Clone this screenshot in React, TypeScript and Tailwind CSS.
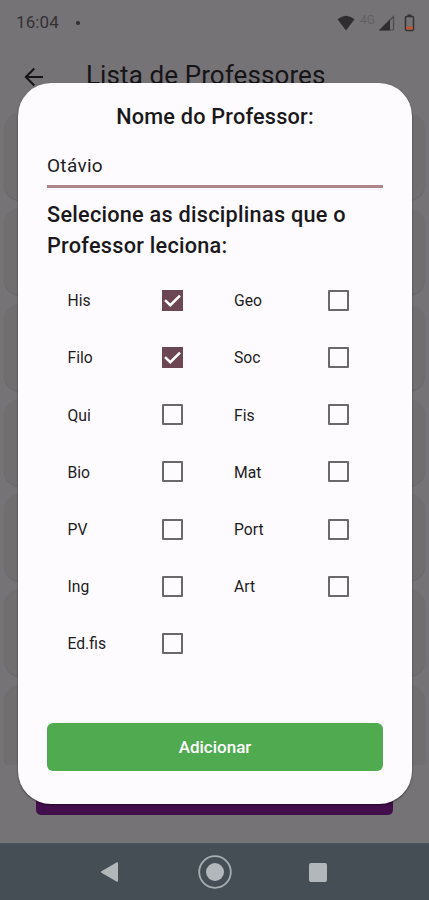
import React, { useState } from "react";

const DISCIPLINES = ["His", "Geo", "Filo", "Soc", "Qui", "Fis", "Bio", "Mat", "PV", "Port", "Ing", "Art", "Ed.fis"];

function StatusBar() {
    return (
        <div className="flex h-[45px] shrink-0 items-center justify-between pl-4 pr-[14px] text-[#333133]">
            <div className="flex items-center text-[17px] tracking-[0.1px]">
                <span>16:04</span>
                <span className="ml-[17px] h-1 w-1 rounded-full bg-[#2f2d2f]" />
            </div>
            <div className="flex items-center">
                <svg width="18" height="16" viewBox="0 0 18 16">
                    <path d="M0.5 4.3Q9-3 17.5 4.3L9 15.5Z" fill="#2f2d2f" />
                </svg>
                <span className="ml-[5px] mb-[6px] w-[17px] text-[12px] leading-none text-[#626063]">4G</span>
                <svg className="ml-[2px]" width="16" height="16" viewBox="0 0 16 16">
                    <path d="M1 15L14.5 1.5V15Z" fill="none" stroke="#4d4b4d" strokeWidth="1.2" />
                    <path d="M0 15.5L11 4.5V15.5Z" fill="#2f2d2f" />
                </svg>
                <svg className="ml-[9px]" width="11" height="18" viewBox="0 0 11 18">
                    <path d="M3.5 0.5h4v2h-4z" fill="#333133" />
                    <rect x="1.5" y="2.5" width="8" height="14" rx="1.2" fill="none" stroke="#333133" strokeWidth="1.5" />
                    <path d="M2.3 12.5h6.4v3h-6.4z" fill="#c4552f" />
                </svg>
            </div>
        </div>
    );
}

function NavigationBar() {
    return (
        <div className="flex h-[57px] shrink-0 items-center justify-center gap-[77px] border-t border-[#49555a] bg-[#454e54]">
            <svg width="20" height="22" viewBox="0 0 20 22">
                <path d="M0.8 11L16.3 2V20Z" fill="#b2b8ba" stroke="#b2b8ba" strokeWidth="1.5" strokeLinejoin="round" />
            </svg>
            <svg width="34" height="34" viewBox="0 0 34 34">
                <circle cx="17" cy="17" r="15.8" fill="none" stroke="#a7aeb1" strokeWidth="1.8" />
                <circle cx="17" cy="17" r="9" fill="#b2b8ba" />
            </svg>
            <div className="flex w-5">
                <div className="h-[19px] w-[18px] rounded-[2px] bg-[#b2b8ba]" />
            </div>
        </div>
    );
}

function DisciplineItem({ name, checked, onToggle }: { name: string; checked: boolean; onToggle: () => void }) {
    return (
        <label className="flex h-[57.15px] items-center">
            <span className="w-[94px] pt-px text-[15.7px] text-[#1d1b1e]">{name}</span>
            <input type="checkbox" className="sr-only" checked={checked} onChange={onToggle} />
            {checked ? (
                <span className="flex h-[21px] w-[21px] items-center justify-center bg-[#6c4653]">
                    <svg width="21" height="21" viewBox="0 0 21 21">
                        <path d="M3 10.2L8.3 15.2L18 5.7" fill="none" stroke="#fff" strokeWidth="2.5" />
                    </svg>
                </span>
            ) : (
                <span className="h-[21px] w-[21px] rounded-[1px] border-2 border-[#6a686b]" />
            )}
        </label>
    );
}

export default function App() {
    const [name, setName] = useState("Otávio");
    const [selected, setSelected] = useState<string[]>(["His", "Filo"]);

    const toggle = (discipline: string) => {
        setSelected((prev) =>
            prev.includes(discipline) ? prev.filter((d) => d !== discipline) : [...prev, discipline]
        );
    };

    return (
        <div className="relative flex h-[900px] w-[429px] flex-col overflow-hidden bg-[#757376] font-[Roboto,sans-serif]">
            <StatusBar />
            <div className="flex h-[63px] shrink-0 items-center pl-[24px] text-[#151416]">
                <svg width="20" height="20" viewBox="0 0 20 20">
                    <path d="M19 10H2M10.3 1.5L1.8 10L10.3 18.5" fill="none" stroke="#151416" strokeWidth="2" />
                </svg>
                <span className="mb-[3px] ml-[42px] text-[26px] leading-none tracking-[0.1px]">Lista de Professores</span>
            </div>
            <div className="flex h-[657px] shrink-0 flex-col gap-[8.3px] overflow-hidden px-1 pt-[5px]">
                {[0, 1, 2, 3, 4, 5, 6].map((i) => (
                    <div key={i} className="h-[87px] shrink-0 rounded-[16px] bg-[#706e6f] shadow-[0_1px_1px_rgba(0,0,0,0.12)]" />
                ))}
            </div>
            <div className="mx-9 mt-[2px] h-12 shrink-0 rounded-[5px] bg-[#430e4c]" />
            <div className="flex-1" />
            <NavigationBar />

            <div className="absolute left-[18px] top-[83px] flex h-[720.5px] w-[393.5px] flex-col rounded-[33px] bg-[#fefbff] pl-[29px] pr-[28.5px] shadow-[0_1px_2px_rgba(0,0,0,0.5)]">
                <h2 className="mt-[22px] text-center text-[21.7px] font-medium leading-6 tracking-[0.2px] text-[#1a181b]">
                    Nome do Professor:
                </h2>
                <input
                    className="mt-[14px] h-[45px] w-full border-b-[3px] border-[#ad858d] pt-[3px] text-[19px] tracking-[0.3px] text-[#1d1b1e] outline-none"
                    value={name}
                    onChange={(e) => setName(e.target.value)}
                />
                <h3 className="mt-[11px] text-[21.7px] font-medium leading-[31px] tracking-[0.25px] text-[#1a181b]">
                    Selecione as disciplinas que o Professor leciona:
                </h3>
                <div className="mt-[11px] grid grid-cols-[166.5px_1fr] pl-[20.5px]">
                    {DISCIPLINES.map((discipline) => (
                        <DisciplineItem
                            key={discipline}
                            name={discipline}
                            checked={selected.includes(discipline)}
                            onToggle={() => toggle(discipline)}
                        />
                    ))}
                </div>
                <button className="mb-[33px] mt-auto h-[47.5px] shrink-0 rounded-[6px] bg-[#4faa50] pt-px text-[17px] font-medium text-white">
                    Adicionar
                </button>
            </div>
        </div>
    );
}
